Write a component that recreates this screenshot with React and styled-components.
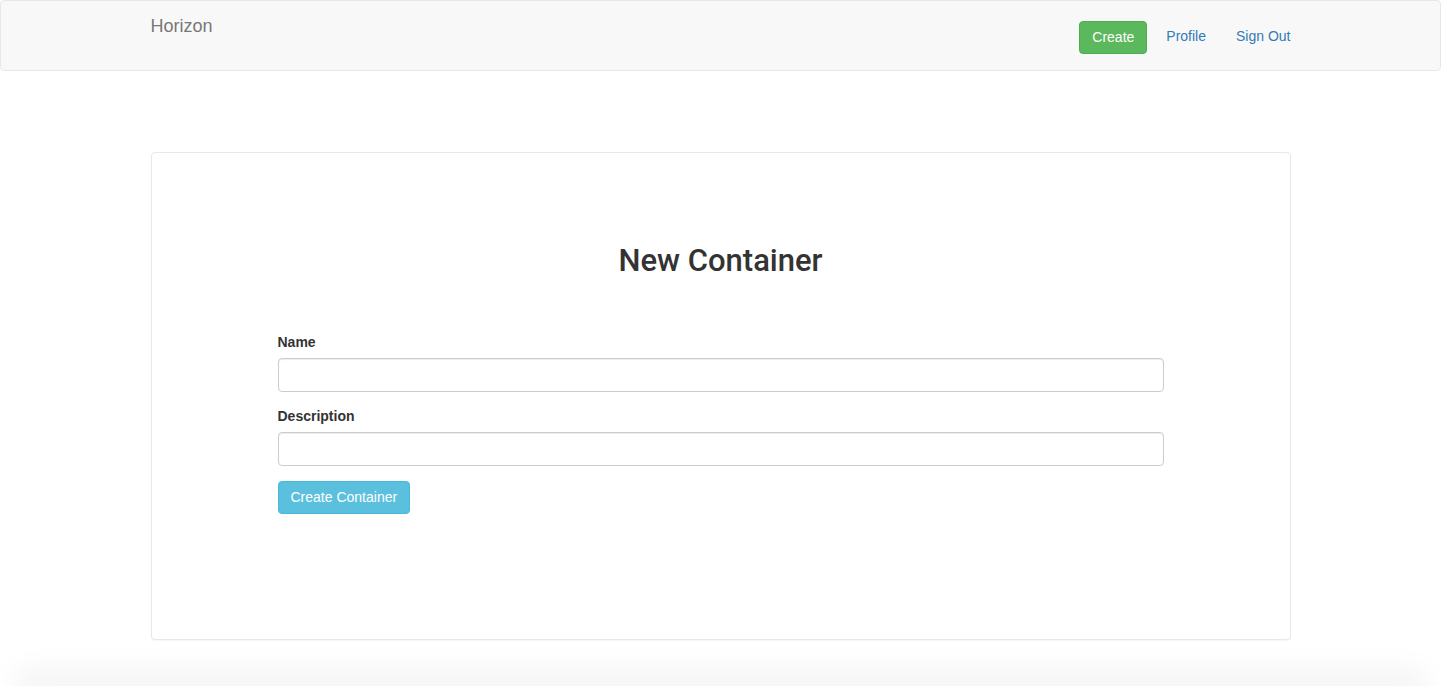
import React from 'react'
import styled, { createGlobalStyle } from 'styled-components'

const GlobalStyle = createGlobalStyle`
  * { box-sizing: border-box; }
  body {
    margin: 0;
    background: #fff;
    font-family: "Liberation Sans", Arial, Helvetica, sans-serif;
    font-size: 14px;
    line-height: 1.42857;
    color: #333;
  }
`

const Page = styled.div`
  height: 700px;
  overflow: hidden;
  display: flex;
  flex-direction: column;
`

const Navbar = styled.nav`
  flex: none;
  background: #f8f8f8;
  border: 1px solid #e7e7e7;
  border-radius: 4px;
  height: 71px;
`

const NavInner = styled.div`
  width: 1170px;
  margin: 0 auto;
  padding: 0 15px;
  display: flex;
  justify-content: space-between;
  align-items: flex-start;
`

const Brand = styled.a`
  padding-top: 15px;
  font-size: 18px;
  line-height: 20px;
  color: #777;
  text-decoration: none;
`

const NavRight = styled.ul`
  list-style: none;
  margin: 0 -15px 0 0;
  padding: 20px 0 0;
  display: flex;
  align-items: flex-start;
`

const NavItem = styled.li`
  padding: 0 ${p => (p.$button ? '4px' : '15px')};
`

const NavLink = styled.a`
  display: block;
  color: #337ab7;
  text-decoration: none;
  font-size: 14px;
  line-height: 30px;
`

const Button = styled.button`
  font-family: inherit;
  font-size: 14px;
  line-height: 20px;
  padding: 5px 12px 6px;
  border-radius: 4px;
  border: 1px solid ${p => p.$border};
  background: ${p => p.$bg};
  color: #fff;
  cursor: pointer;
`

const Main = styled.main`
  flex: none;
  width: 1170px;
  margin: 0 auto;
  padding: 81px 15px 0;
`

const Panel = styled.section`
  background: #fff;
  border: 1px solid #e8e8e8;
  border-radius: 4px;
  box-shadow: 0 1px 1px rgba(0, 0, 0, 0.04);
  height: 488px;
  padding-top: 91px;
`

const Title = styled.h2`
  margin: 0 0 56px;
  font-family: Roboto, "Liberation Sans", Arial, sans-serif;
  font-size: 31px;
  font-weight: 500;
  line-height: 33px;
  text-align: center;
  color: #333;
`

const Form = styled.form`
  width: 886px;
  margin: 0 auto;
`

const FormGroup = styled.div`
  margin-bottom: 15px;
`

const Label = styled.label`
  display: block;
  font-weight: 700;
  margin-bottom: 5px;
`

const Input = styled.input`
  display: block;
  width: 100%;
  height: 34px;
  padding: 6px 12px;
  font-family: inherit;
  font-size: 14px;
  color: #555;
  background: #fff;
  border: 1px solid #ccc;
  border-radius: 4px;
  box-shadow: inset 0 1px 1px rgba(0, 0, 0, 0.075);
  outline: none;
`

const Footer = styled.footer`
  flex: none;
  margin-top: 46px;
  height: 60px;
  background: #fff;
  box-shadow: 0 -30px 30px -15px rgba(0, 0, 0, 0.05);
`

const App = () => {
  return (
    <Page>
      <GlobalStyle />
      <Navbar>
        <NavInner>
          <Brand href="#">Horizon</Brand>
          <NavRight>
            <NavItem $button>
              <Button $bg="#5cb85c" $border="#4cae4c">Create</Button>
            </NavItem>
            <NavItem>
              <NavLink href="#">Profile</NavLink>
            </NavItem>
            <NavItem>
              <NavLink href="#">Sign Out</NavLink>
            </NavItem>
          </NavRight>
        </NavInner>
      </Navbar>
      <Main>
        <Panel>
          <Title>New Container</Title>
          <Form onSubmit={e => e.preventDefault()}>
            <FormGroup>
              <Label>Name</Label>
              <Input type="text" />
            </FormGroup>
            <FormGroup>
              <Label>Description</Label>
              <Input type="text" />
            </FormGroup>
            <Button type="submit" $bg="#5bc0de" $border="#46b8da">Create Container</Button>
          </Form>
        </Panel>
      </Main>
      <Footer />
    </Page>
  )
}

export default App
